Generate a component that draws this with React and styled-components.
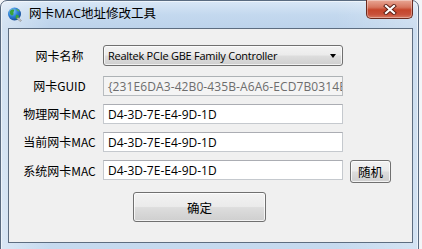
import React from "react";
import styled, { createGlobalStyle } from "styled-components";

const GlobalStyle = createGlobalStyle`
  html, body { margin: 0; padding: 0; }
  body {
    background: #f3f5f8;
    overflow: hidden;
    font-family: "Open Sans", "Noto Sans CJK SC", sans-serif;
    font-size: 12px;
    color: #000;
  }
`;

const Window = styled.div`
  box-sizing: border-box;
  width: 419px;
  height: 251px;
  display: flex;
  flex-direction: column;
  border: 1px solid #5a6b80;
  border-radius: 7px 7px 0 0;
  background:
    linear-gradient(90deg, rgba(255,255,255,0.35) 0, rgba(255,255,255,0) 12%, rgba(255,255,255,0) 80%, rgba(255,255,255,0.25) 100%),
    linear-gradient(180deg, #d9e7f6 0, #c3d8ee 14px, #bcd3eb 28px, #c6daef 100%);
  box-shadow: inset 0 0 0 1px rgba(255,255,255,0.55);
`;

const TitleBar = styled.div`
  height: 27px;
  display: flex;
  align-items: flex-start;
  padding: 0 5px 0 6px;
`;

const IconBox = styled.div`
  width: 16px;
  height: 16px;
  margin-top: 5px;
`;

const Title = styled.div`
  margin-left: 6px;
  margin-top: 5px;
  font-size: 12.5px;
  line-height: 16px;
  color: #000;
  font-family: "Open Sans", "Noto Sans CJK SC", sans-serif;
`;

const CloseButton = styled.div`
  margin-left: auto;
  margin-top: -1px;
  width: 47px;
  height: 19px;
  box-sizing: border-box;
  border: 1px solid #6b2a1e;
  border-top: none;
  border-radius: 0 0 5px 5px;
  background: linear-gradient(180deg, #e9a795 0%, #d7765f 40%, #c5452b 55%, #c8503a 80%, #d67a62 100%);
  box-shadow: inset 0 0 0 1px rgba(255,255,255,0.35);
  display: flex;
  align-items: center;
  justify-content: center;
`;

const Client = styled.div`
  flex: 1;
  margin: 0 5px 7px 7px;
  border: 1px solid #5d6d80;
  background: #f0f0f0;
  padding: 16px 0 0 0;
  display: flex;
  flex-direction: column;
`;

const FormGrid = styled.div`
  display: grid;
  grid-template-columns: 87px 240px 41px;
  column-gap: 7px;
  row-gap: 8px;
  align-items: start;
`;

const Label = styled.div`
  align-self: center;
  padding-left: 14px;
  text-align: center;
  font-family: "Noto Sans CJK SC", "Open Sans", sans-serif;
  font-size: 12px;
  line-height: 16px;
  white-space: nowrap;
  margin-top: ${(p) => (p.$raise ? "-2px" : "0")};
  color: #000;
`;

const Combo = styled.div`
  box-sizing: border-box;
  height: 21px;
  margin-bottom: 2px;
  border: 1px solid #707070;
  border-radius: 3px;
  background: linear-gradient(180deg, #f3f3f3 0%, #ebebeb 48%, #dddddd 52%, #cfcfcf 100%);
  box-shadow: inset 0 0 0 1px rgba(255,255,255,0.7);
  display: flex;
  align-items: center;
  padding: 0 6px 0 4px;
  font-family: "Open Sans", sans-serif;
  font-size: 11px;
  white-space: nowrap;
`;

const ComboText = styled.span`
  flex: 1;
  overflow: hidden;
  letter-spacing: -0.25px;
`;

const Arrow = styled.span`
  width: 0;
  height: 0;
  border-left: 3.5px solid transparent;
  border-right: 3.5px solid transparent;
  border-top: 4px solid #000;
`;

const TextBox = styled.div`
  box-sizing: border-box;
  height: 20px;
  border: 1px solid ${(p) => (p.$disabled ? "#b8bcc0" : "#c5c9ce")};
  border-top-color: ${(p) => (p.$disabled ? "#adb2b5" : "#abadb3")};
  background: ${(p) => (p.$disabled ? "#f4f4f4" : "#fff")};
  color: ${(p) => (p.$disabled ? "#6d6d6d" : "#000")};
  padding: 0 0 0 4px;
  display: flex;
  align-items: center;
  overflow: hidden;
  white-space: nowrap;
  font-family: "Open Sans", sans-serif;
  font-size: 12px;
  letter-spacing: ${(p) => (p.$disabled ? "0.1px" : "0")};
`;

const Button = styled.button`
  box-sizing: border-box;
  width: ${(p) => p.$w}px;
  height: ${(p) => p.$h}px;
  border: 1px solid #707070;
  border-radius: 3px;
  background: linear-gradient(180deg, #f2f2f2 0%, #ebebeb 48%, #dddddd 52%, #cfcfcf 100%);
  box-shadow: inset 0 0 0 1px rgba(255,255,255,0.75);
  font-family: "Noto Sans CJK SC", sans-serif;
  font-size: 12.5px;
  color: #000;
  padding: 0;
  display: flex;
  align-items: center;
  justify-content: center;
`;

const ConfirmRow = styled.div`
  display: flex;
  padding-left: 124px;
  margin-top: 9px;
`;

const GlobeIcon = () => (
  <svg width="16" height="16" viewBox="0 0 16 16">
    <defs>
      <radialGradient id="g" cx="0.35" cy="0.3" r="0.8">
        <stop offset="0" stopColor="#8fd0ff" />
        <stop offset="0.5" stopColor="#2b7fd4" />
        <stop offset="1" stopColor="#12408a" />
      </radialGradient>
    </defs>
    <circle cx="7.5" cy="8" r="6.5" fill="url(#g)" />
    <path d="M3 5.5 C4 3.5 6 3 7 4 C7.5 5 6 6 6.5 7.5 C7 9 5 10 4 9 C3 8 2.5 7 3 5.5 Z" fill="#3aa33a" />
    <path d="M9 9 C10 8.5 11.5 9 12 10.5 C11.5 12.5 10 13.5 9 13 C8.5 12 8.5 10 9 9 Z" fill="#3aa33a" />
    <path d="M9 3 C10.5 3 12 4 12.5 5.5 C11.5 5.5 10 5 9 3 Z" fill="#55b84a" />
    <path d="M11 11.5 L14.5 14.5 L13 15.5 L10 12.5 Z" fill="#c9c9c9" stroke="#7a7a7a" strokeWidth="0.5" />
  </svg>
);

const CloseX = () => (
  <svg width="14" height="11" viewBox="0 0 14 11">
    <path d="M3 2 L11 9 M11 2 L3 9" stroke="#5a1e14" strokeWidth="4" strokeLinecap="square" />
    <path d="M3 2 L11 9 M11 2 L3 9" stroke="#ffffff" strokeWidth="2.2" strokeLinecap="square" />
  </svg>
);

export default function App() {
  return (
    <>
      <GlobalStyle />
      <Window>
        <TitleBar>
          <IconBox>
            <GlobeIcon />
          </IconBox>
          <Title>网卡MAC地址修改工具</Title>
          <CloseButton>
            <CloseX />
          </CloseButton>
        </TitleBar>
        <Client>
          <FormGrid>
            <Label $raise>网卡名称</Label>
            <Combo>
              <ComboText>Realtek PCIe GBE Family Controller</ComboText>
              <Arrow />
            </Combo>
            <span />

            <Label>网卡GUID</Label>
            <TextBox $disabled>{"{231E6DA3-42B0-435B-A6A6-ECD7B0314E5F}"}</TextBox>
            <span />

            <Label>物理网卡MAC</Label>
            <TextBox>D4-3D-7E-E4-9D-1D</TextBox>
            <span />

            <Label>当前网卡MAC</Label>
            <TextBox>D4-3D-7E-E4-9D-1D</TextBox>
            <span />

            <Label $raise>系统网卡MAC</Label>
            <TextBox>D4-3D-7E-E4-9D-1D</TextBox>
            <Button $w={41} $h={23}>随机</Button>
          </FormGrid>
          <ConfirmRow>
            <Button $w={133} $h={30}>确定</Button>
          </ConfirmRow>
        </Client>
      </Window>
    </>
  );
}
